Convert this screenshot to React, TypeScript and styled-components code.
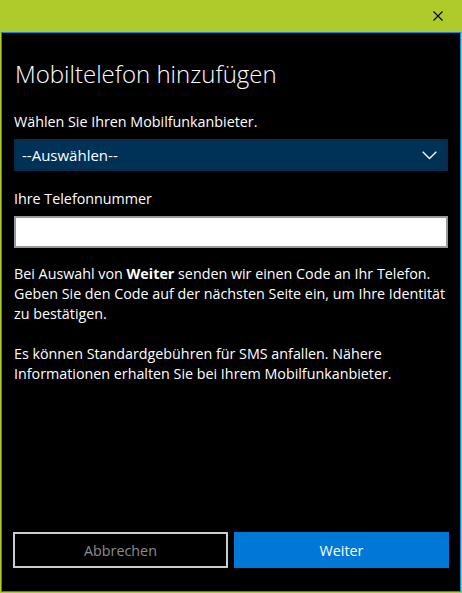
import React from "react";
import styled, { createGlobalStyle } from "styled-components";

const GlobalStyle = createGlobalStyle`
  html, body {
    margin: 0;
    padding: 0;
    background: #afca2b;
  }
  * {
    box-sizing: border-box;
  }
`;

const font = `"Open Sans", "Noto Sans", "Liberation Sans", sans-serif`;

export default function App() {
  return (
    <>
      <GlobalStyle />
      <Window>
        <TitleBar>
          <CloseButton aria-label="Schließen">
            <svg width="10" height="10" viewBox="0 0 10 10">
              <path d="M0.5 0.5 L9.5 9.5 M9.5 0.5 L0.5 9.5" stroke="#000" strokeWidth="1.1" />
            </svg>
          </CloseButton>
        </TitleBar>
        <Content>
          <Heading>Mobiltelefon hinzufügen</Heading>
          <Label>Wählen Sie Ihren Mobilfunkanbieter.</Label>
          <Select>
            <span>--Auswählen--</span>
            <svg width="15" height="9" viewBox="0 0 15 9">
              <path d="M0.7 0.7 L7.5 7.5 L14.3 0.7" fill="none" stroke="#fff" strokeWidth="1.3" />
            </svg>
          </Select>
          <Label $gap={18}>Ihre Telefonnummer</Label>
          <Input type="tel" />
          <Text>
            Bei Auswahl von <strong>Weiter</strong> senden wir einen Code an Ihr Telefon.
            Geben Sie den Code auf der nächsten Seite ein, um Ihre Identität zu bestätigen.
          </Text>
          <Text>
            Es können Standardgebühren für SMS anfallen. Nähere Informationen erhalten Sie bei
            Ihrem Mobilfunkanbieter.
          </Text>
          <ButtonRow>
            <Button>Abbrechen</Button>
            <Button $primary>Weiter</Button>
          </ButtonRow>
        </Content>
      </Window>
    </>
  );
}

const Window = styled.div`
  width: 462px;
  height: 593px;
  display: flex;
  flex-direction: column;
  background: #afca2b;
  font-family: ${font};
`;

const TitleBar = styled.div`
  height: 32px;
  flex: none;
  display: flex;
  justify-content: flex-end;
  align-items: flex-start;
`;

const CloseButton = styled.button`
  width: 46px;
  height: 31px;
  border: 0;
  padding: 0;
  background: transparent;
  display: flex;
  align-items: center;
  justify-content: center;
  margin-right: 1px;
`;

const Content = styled.div`
  flex: 1;
  margin: 0 1px 1px;
  border: 1px solid #1a84d8;
  background: #000;
  color: #fff;
  padding: 25px 12px 23px;
  display: flex;
  flex-direction: column;
`;

const Heading = styled.h1`
  margin: 0 0 22px 1px;
  font-size: 24px;
  font-weight: 300;
  line-height: 32px;
`;

const Label = styled.div<{ $gap?: number }>`
  margin-top: ${(p) => p.$gap ?? 0}px;
  font-size: 14.3px;
  line-height: 20px;
  margin-bottom: 7px;
`;

const Select = styled.div`
  height: 32px;
  background: #003157;
  border: 2px solid #0b2a47;
  display: flex;
  align-items: center;
  justify-content: space-between;
  padding: 0 9px 0 6px;
  font-size: 15px;
`;

const Input = styled.input`
  height: 32px;
  width: 100%;
  background: #fff;
  border: 2px solid #999;
  outline: none;
  margin: 0;
  font-family: ${font};
`;

const Text = styled.p`
  margin: 16px 0 0;
  font-size: 14.3px;
  line-height: 20px;
  & + & {
    margin-top: 20px;
  }
  strong {
    font-weight: 700;
  }
`;

const ButtonRow = styled.div`
  margin: auto -1px 0;
  display: grid;
  grid-template-columns: 1fr 1fr;
  gap: 6px;
`;

const Button = styled.button<{ $primary?: boolean }>`
  height: 36px;
  font-family: ${font};
  font-size: 14.3px;
  border: 2px solid ${(p) => (p.$primary ? "#0078d7" : "#cccccc")};
  background: ${(p) => (p.$primary ? "#0078d7" : "#000")};
  color: ${(p) => (p.$primary ? "#fff" : "#8c8c8c")};
  padding: 0;
`;
